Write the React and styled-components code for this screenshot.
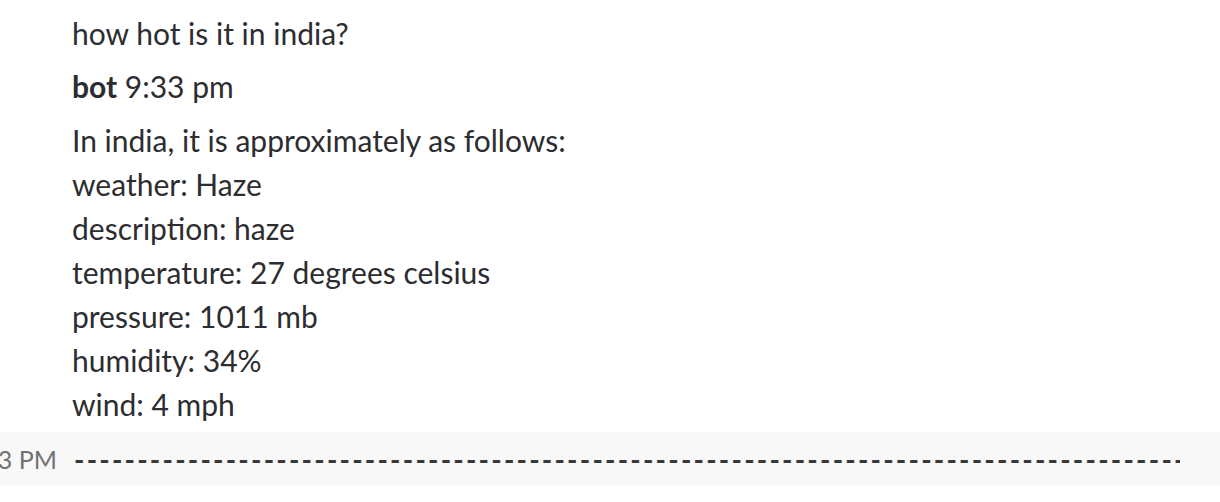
import React from "react";
import styled, { createGlobalStyle } from "styled-components";

const Global = createGlobalStyle`
  html, body { margin: 0; padding: 0; background: #fff; overflow: hidden; }
  body { font-family: Lato, "Noto Sans", sans-serif; color: #2c2d30; }
`;

const Page = styled.div`
  width: 1220px;
  height: 502px;
  display: flex;
  flex-direction: column;
  padding-top: 11px;
  box-sizing: border-box;
`;

const Block = styled.div`
  padding-left: 72px;
  margin-bottom: ${(p) => p.$gap || 0}px;
`;

const Line = styled.div`
  font-size: 30px;
  line-height: 44px;
  white-space: nowrap;
`;

const Sender = styled.span`
  font-weight: 700;
`;

const Row = styled.div`
  margin-top: 6px;
  height: 54px;
  background: #f8f8f8;
  display: flex;
  align-items: center;
`;

const Gutter = styled.div`
  width: 57px;
  flex: none;
  display: flex;
  justify-content: flex-end;
  overflow: visible;
`;

const Stamp = styled.span`
  font-size: 25px;
  color: #727272;
  white-space: nowrap;
`;

const Dashes = styled.div`
  margin-left: 17px;
  font-size: 28px;
  font-weight: 700;
  color: #383838;
  letter-spacing: 2.2px;
  white-space: nowrap;
  overflow: hidden;
  width: 1106px;
`;

const lines = [
  "In india, it is approximately as follows:",
  "weather: Haze",
  "description: haze",
  "temperature: 27 degrees celsius",
  "pressure: 1011 mb",
  "humidity: 34%",
  "wind: 4 mph",
];

export default function App() {
  return (
    <>
      <Global />
      <Page>
        <Block $gap={9}>
          <Line>how hot is it in india?</Line>
        </Block>
        <Block $gap={10}>
          <Line>
            <Sender>bot</Sender> 9:33 pm
          </Line>
        </Block>
        <Block>
          {lines.map((l) => (
            <Line key={l}>{l}</Line>
          ))}
        </Block>
        <Row>
          <Gutter>
            <Stamp>9:33 PM</Stamp>
          </Gutter>
          <Dashes>{"-".repeat(100)}</Dashes>
        </Row>
      </Page>
    </>
  );
}
